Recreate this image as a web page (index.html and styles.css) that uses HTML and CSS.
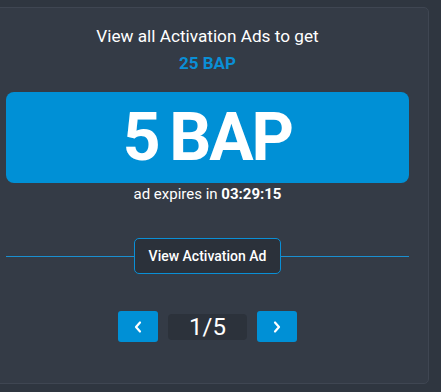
FILE: index.html
```html
<!DOCTYPE html>
<html>
<head>
<meta charset="utf-8">
<link rel="stylesheet" href="styles.css">
</head>
<body>
<div class="card">
  <p class="title">View all Activation Ads to get</p>
  <p class="total">25 BAP</p>
  <div class="reward">5 BAP</div>
  <p class="expires">ad expires in <b>03:29:15</b></p>
  <div class="divider">
    <button class="view-btn">View Activation Ad</button>
  </div>
  <div class="pager">
    <button class="nav"><svg width="10" height="14" viewBox="0 0 10 14"><path d="M7 2.5 L3 7 L7 11.5" fill="none" stroke="#fff" stroke-width="2.2" stroke-linecap="round" stroke-linejoin="round"/></svg></button>
    <span class="count">1/5</span>
    <button class="nav"><svg width="10" height="14" viewBox="0 0 10 14"><path d="M3 2.5 L7 7 L3 11.5" fill="none" stroke="#fff" stroke-width="2.2" stroke-linecap="round" stroke-linejoin="round"/></svg></button>
  </div>
</div>
</body>
</html>
```
FILE: styles.css
```css
html, body {
  margin: 0;
  padding: 0;
  background: #2f3640;
  font-family: Roboto, "Liberation Sans", sans-serif;
  color: #fff;
}
.card {
  box-sizing: border-box;
  margin: 7px 12px 0 -15px;
  height: 377px;
  border: 1px solid #3f4652;
  border-radius: 5px;
  background: #343b46;
  padding: 18px 19px 0 20px;
  display: flex;
  flex-direction: column;
  align-items: center;
}
p { margin: 0; }
.title {
  font-size: 17.2px;
  line-height: 20px;
}
.total {
  margin-top: 7px;
  font-size: 17px;
  line-height: 20px;
  font-weight: 700;
  color: #0a8fd6;
}
.reward {
  margin-top: 19px;
  align-self: stretch;
  height: 91px;
  background: #0090d6;
  border-radius: 8px;
  display: flex;
  align-items: center;
  justify-content: center;
  font-size: 66px;
  font-weight: 700;
  letter-spacing: -2px;
  word-spacing: -4px;
}
.expires {
  margin-top: 3px;
  font-size: 15px;
  line-height: 16px;
}
.divider {
  margin-top: 36px;
  align-self: stretch;
  display: flex;
  justify-content: center;
  align-items: center;
  background: linear-gradient(#1a8fd0, #1a8fd0) 0 18px / 100% 1px no-repeat;
}
.view-btn {
  height: 36px;
  padding: 0 14px;
  border: 1px solid #0a8fd6;
  border-radius: 5px;
  background: #2b313a;
  color: #fff;
  font-family: Roboto, "Liberation Sans", sans-serif;
  font-size: 14px;
  font-weight: 500;
}
.pager {
  margin-top: 37px;
  display: flex;
  align-items: center;
  gap: 10px;
}
.nav {
  width: 40px;
  height: 31px;
  border: 0;
  border-radius: 3px;
  background: #0090d6;
  padding: 0;
  display: flex;
  align-items: center;
  justify-content: center;
}
.count {
  width: 79px;
  height: 26px;
  border-radius: 4px;
  background: #2c323b;
  font-size: 24px;
  line-height: 26px;
  text-align: center;
}
```
